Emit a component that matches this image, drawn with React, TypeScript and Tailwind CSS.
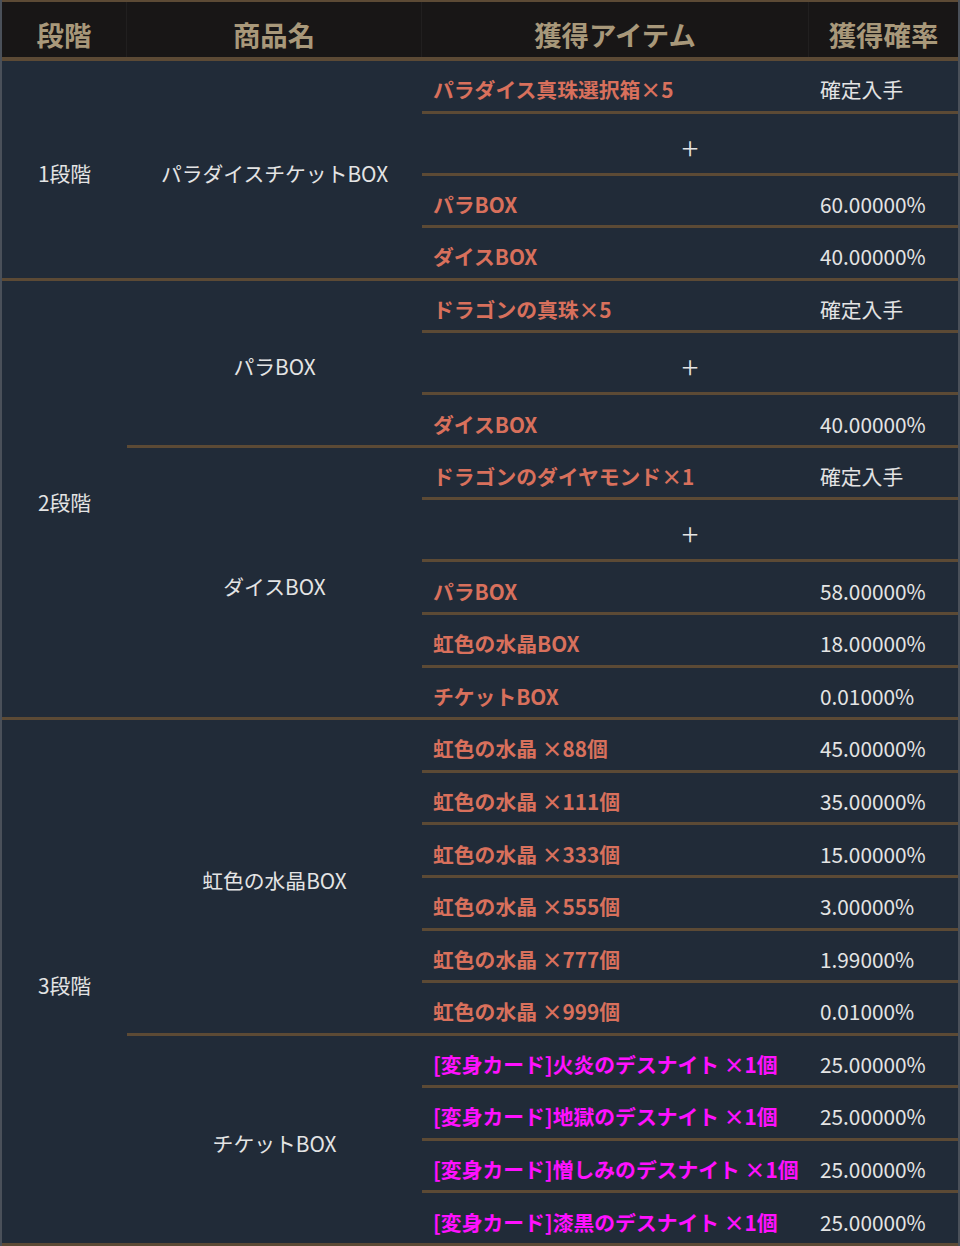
import React from "react";

type Row = { item: string; rate: string } | "plus";
type Product = { name: string; rows: Row[]; magenta?: boolean };
type Stage = { label: string; products: Product[] };

const data: Stage[] = [
  {
    label: "1段階",
    products: [
      {
        name: "パラダイスチケットBOX",
        rows: [
          { item: "パラダイス真珠選択箱×5", rate: "確定入手" },
          "plus",
          { item: "パラBOX", rate: "60.00000%" },
          { item: "ダイスBOX", rate: "40.00000%" },
        ],
      },
    ],
  },
  {
    label: "2段階",
    products: [
      {
        name: "パラBOX",
        rows: [
          { item: "ドラゴンの真珠×5", rate: "確定入手" },
          "plus",
          { item: "ダイスBOX", rate: "40.00000%" },
        ],
      },
      {
        name: "ダイスBOX",
        rows: [
          { item: "ドラゴンのダイヤモンド×1", rate: "確定入手" },
          "plus",
          { item: "パラBOX", rate: "58.00000%" },
          { item: "虹色の水晶BOX", rate: "18.00000%" },
          { item: "チケットBOX", rate: "0.01000%" },
        ],
      },
    ],
  },
  {
    label: "3段階",
    products: [
      {
        name: "虹色の水晶BOX",
        rows: [
          { item: "虹色の水晶 ×88個", rate: "45.00000%" },
          { item: "虹色の水晶 ×111個", rate: "35.00000%" },
          { item: "虹色の水晶 ×333個", rate: "15.00000%" },
          { item: "虹色の水晶 ×555個", rate: "3.00000%" },
          { item: "虹色の水晶 ×777個", rate: "1.99000%" },
          { item: "虹色の水晶 ×999個", rate: "0.01000%" },
        ],
      },
      {
        name: "チケットBOX",
        magenta: true,
        rows: [
          { item: "[変身カード]火炎のデスナイト ×1個", rate: "25.00000%" },
          { item: "[変身カード]地獄のデスナイト ×1個", rate: "25.00000%" },
          { item: "[変身カード]憎しみのデスナイト ×1個", rate: "25.00000%" },
          { item: "[変身カード]漆黒のデスナイト ×1個", rate: "25.00000%" },
        ],
      },
    ],
  },
];

const font = { fontFamily: '"Noto Sans CJK JP", "Noto Sans", sans-serif' };

export default function App() {
  return (
    <div
      className="w-[960px] bg-[#212b38] border-l-2 border-r-2 border-[#4a5059] text-[#e4e4e4]"
      style={font}
    >
      {/* header */}
      <div className="flex h-[61px] bg-[#181616] border-t-2 border-b-4 border-[#5c4a35] text-[27.4px] font-bold text-[#a8987a]">
        <div className="w-[125px] flex items-center justify-center pt-[11px] border-r border-[#211f1f]">段階</div>
        <div className="w-[295px] flex items-center justify-center pt-[11px] border-r border-[#211f1f]">商品名</div>
        <div className="w-[387px] flex items-center justify-center pt-[11px] border-r border-[#211f1f]">獲得アイテム</div>
        <div className="flex-1 flex items-center justify-center pt-[11px]">獲得確率</div>
      </div>
      {data.map((stage, si) => (
        <div key={si} className="flex border-b-[3px] border-[#5c4a35]">
          <div className="w-[125px] shrink-0 flex items-center justify-center pt-[8px] text-[20.8px]">
            {stage.label}
          </div>
          <div className="flex-1 flex flex-col">
            {stage.products.map((p, pi) => (
              <div
                key={pi}
                className={
                  "flex " +
                  (pi < stage.products.length - 1 ? "border-b-[3px] border-[#5c4a35]" : "")
                }
              >
                <div className="w-[295px] shrink-0 flex items-center justify-center pt-[8px] text-[20.8px]">
                  {p.name}
                </div>
                <div className="flex-1 flex flex-col">
                  {p.rows.map((r, ri) => {
                    const last = ri === p.rows.length - 1;
                    const bb = last ? "" : " border-b-[3px] border-[#5c4a35]";
                    if (r === "plus") {
                      return (
                        <div
                          key={ri}
                          className={"h-[62px] flex items-center justify-center pt-[6px] text-[31px] font-light leading-none" + bb}
                        >
                          +
                        </div>
                      );
                    }
                    return (
                      <div
                        key={ri}
                        className={(last ? "h-[49.58px]" : "h-[52.58px]") + " flex items-center pt-[8px]" + bb}
                      >
                        <div
                          className={
                            "w-[387px] shrink-0 pl-[11px] text-[20.8px] font-bold whitespace-nowrap " +
                            (p.magenta ? "text-[#ff10ff]" : "text-[#d8705c]")
                          }
                        >
                          {r.item}
                        </div>
                        <div className="flex-1 pl-[11px] text-[20.8px] whitespace-nowrap">{r.rate}</div>
                      </div>
                    );
                  })}
                </div>
              </div>
            ))}
          </div>
        </div>
      ))}
    </div>
  );
}
